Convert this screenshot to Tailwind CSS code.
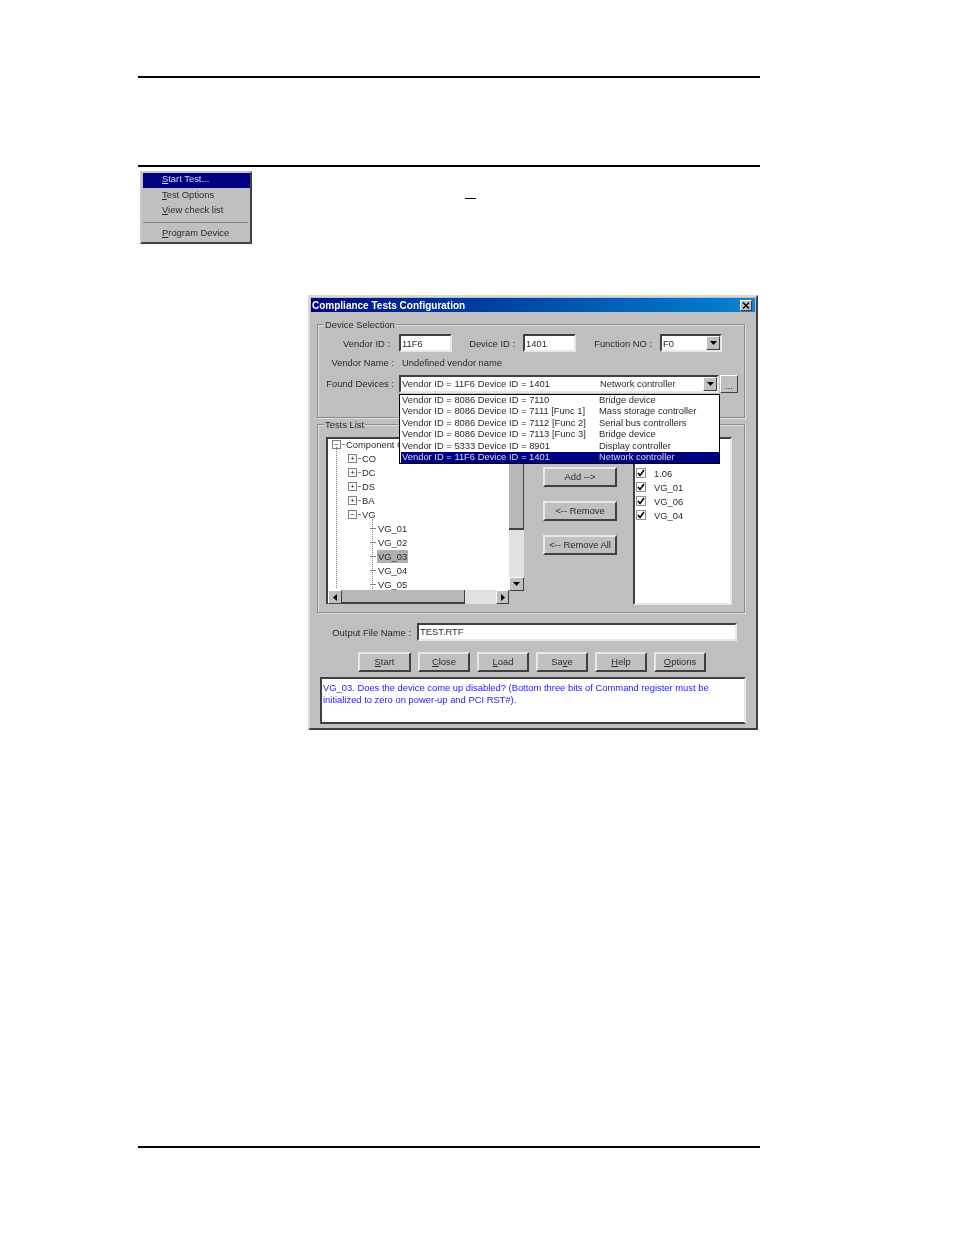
<!DOCTYPE html>
<html lang="en">
<head>
  <meta charset="UTF-8" />
  <title>Compliance Tests Configuration</title>
  <script src="https://cdn.jsdelivr.net/npm/@tailwindcss/browser@4"></script>
</head>
<body class="bg-white font-['Liberation_Sans',Arial,sans-serif] text-[9.4px] leading-[11px] text-[#2a2a2a]">
  <div class="w-[954px] h-[1235px] overflow-hidden pl-[138px] pt-[76px]">
    <div class="w-[622px] h-[2px] bg-black"></div>
    <div class="w-[622px] h-[2px] bg-black mt-[87px]"></div>

    <!-- context menu + stray underscore -->
    <div class="flex mt-[4px] ml-[2px] h-[73px]">
      <div class="w-[112px] h-[73px] bg-[#c0c0c0] border-2 border-t-[#c8c8c8] border-l-[#c8c8c8] border-r-[#404040] border-b-[#404040] pl-[1px] pt-0 blur-[0.6px]">
        <div class="h-[15px] bg-[#000080] text-[#d8d8ff] pl-[19px] pb-[4px] flex items-center"><span><u>S</u>tart Test...</span></div>
        <div class="h-[16px] pl-[19px] pb-[4px] flex items-center"><span><u>T</u>est Options</span></div>
        <div class="h-[15px] pl-[19px] pb-[4px] flex items-center"><span><u>V</u>iew check list</span></div>
        <div class="h-[1px] bg-[#808080] mt-[3px] mb-[1px] mr-[2px]"></div>
        <div class="h-[16px] pl-[19px] pb-[4px] mt-[3px] flex items-center"><span><u>P</u>rogram Device</span></div>
      </div>
      <div class="w-[11px] h-[1px] bg-black ml-[213px] mt-[27px]"></div>
    </div>

    <!-- dialog -->
    <div class="w-[450px] h-[435px] ml-[170px] mt-[51px] bg-[#bfbfbf] border-2 border-t-[#d8d8d8] border-l-[#d8d8d8] border-r-[#404040] border-b-[#404040] p-px blur-[0.6px]">
      <div class="h-[14px] bg-gradient-to-r from-[#000080] to-[#1084d0] flex items-center justify-between pl-[1px] pr-[3px]">
        <span class="text-white font-bold text-[10px] pt-px">Compliance Tests Configuration</span>
        <div class="w-[12px] h-[11px] bg-[#c0c0c0] border border-t-white border-l-white border-r-[#404040] border-b-[#404040] flex items-center justify-center">
          <svg viewBox="0 0 8 7" class="w-[8px] h-[7px]"><path d="M1 0.5 7 6.5M7 0.5 1 6.5" stroke="#000" stroke-width="1.4" fill="none"/></svg>
        </div>
      </div>

      <div class="px-[6px] pt-[12px]">
        <!-- device selection -->
        <div class="relative w-[428px] h-[94px] border border-[#8a8a8a] shadow-[inset_1px_1px_0_#e0e0e0,1px_1px_0_#e0e0e0] pt-[9px]">
          <span class="absolute -top-[6px] left-[6px] bg-[#bfbfbf] px-[1px]">Device Selection</span>
          <div class="flex items-center h-[18px]">
            <span class="w-[72px] text-right">Vendor ID :</span>
            <div class="ml-[9px] w-[53px] h-[18px] bg-white border-2 border-t-[#404040] border-l-[#404040] border-r-[#e8e8e8] border-b-[#e8e8e8] flex items-center pl-px">11F6</div>
            <span class="w-[63px] text-right">Device ID :</span>
            <div class="ml-[8px] w-[53px] h-[18px] bg-white border-2 border-t-[#404040] border-l-[#404040] border-r-[#e8e8e8] border-b-[#e8e8e8] flex items-center pl-px">1401</div>
            <span class="w-[76px] text-right">Function NO :</span>
            <div class="ml-[8px] w-[62px] h-[18px] bg-white border-2 border-t-[#404040] border-l-[#404040] border-r-[#e8e8e8] border-b-[#e8e8e8] flex items-center justify-between pl-px">
              <span>F0</span>
              <div class="w-[14px] h-[14px] bg-[#c0c0c0] border border-t-white border-l-white border-r-[#404040] border-b-[#404040] flex items-center justify-center">
                <svg viewBox="0 0 7 4" class="w-[7px] h-[4px]"><path d="M0 0h7L3.5 4z" fill="#000"/></svg>
              </div>
            </div>
          </div>
          <div class="flex items-center h-[14px] mt-[3px]">
            <span class="w-[76px] text-right">Vendor Name :</span>
            <span class="ml-[8px]">Undefined vendor name</span>
          </div>
          <div class="flex items-center h-[18px] mt-[6px]">
            <span class="w-[76px] text-right pb-[2px]">Found Devices :</span>
            <div class="relative ml-[5px] w-[320px] h-[18px] bg-white border-2 border-t-[#404040] border-l-[#404040] border-r-[#e8e8e8] border-b-[#e8e8e8] flex items-center pl-px pb-[2px]">
              <span class="w-[198px]">Vendor ID = 11F6 Device ID = 1401</span>
              <span>Network controller</span>
              <div class="absolute right-0 top-0 w-[14px] h-[14px] bg-[#c0c0c0] border border-t-white border-l-white border-r-[#404040] border-b-[#404040] flex items-center justify-center">
                <svg viewBox="0 0 7 4" class="w-[7px] h-[4px]"><path d="M0 0h7L3.5 4z" fill="#000"/></svg>
              </div>
              <!-- open dropdown -->
              <div class="absolute z-10 -left-[2px] top-[17px] w-[321px] h-[70px] bg-white border border-black pl-[2px] leading-[9.4px]">
                <div class="flex h-[11.4px]"><span class="w-[197px]">Vendor ID = 8086 Device ID = 7110</span><span>Bridge device</span></div>
                <div class="flex h-[11.4px]"><span class="w-[197px]">Vendor ID = 8086 Device ID = 7111 [Func 1]</span><span>Mass storage controller</span></div>
                <div class="flex h-[11.4px]"><span class="w-[197px]">Vendor ID = 8086 Device ID = 7112 [Func 2]</span><span>Serial bus controllers</span></div>
                <div class="flex h-[11.4px]"><span class="w-[197px]">Vendor ID = 8086 Device ID = 7113 [Func 3]</span><span>Bridge device</span></div>
                <div class="flex h-[11.4px]"><span class="w-[197px]">Vendor ID = 5333 Device ID = 8901</span><span>Display controller</span></div>
                <div class="flex h-[11.4px] bg-[#000080] text-[#d8d8ff] -ml-[1px] pl-px"><span class="w-[197px]">Vendor ID = 11F6 Device ID = 1401</span><span>Network controller</span></div>
              </div>
            </div>
            <div class="ml-px w-[18px] h-[18px] bg-[#c0c0c0] border border-t-white border-l-white border-r-[#404040] border-b-[#404040] flex items-center justify-center pt-[3px]">...</div>
          </div>
        </div>

        <!-- tests list -->
        <div class="relative w-[428px] h-[189px] mt-[6px] border border-[#8a8a8a] shadow-[inset_1px_1px_0_#e0e0e0,1px_1px_0_#e0e0e0] pt-[12px] pl-[8px] flex">
          <span class="absolute -top-[6px] left-[6px] bg-[#bfbfbf] px-[1px]">Tests List</span>

          <!-- tree -->
          <div class="relative w-[198px] h-[167px] bg-white border-2 border-r-0 border-b-0 border-t-[#404040] border-l-[#404040] overflow-hidden">
            <div class="absolute left-[8px] top-[8px] bottom-[16px] border-l border-dotted border-[#808080]"></div>
            <div class="absolute left-[44px] top-[80px] h-[70px] border-l border-dotted border-[#808080]"></div>
            <div class="-mt-[2px]">
              <div class="flex items-center h-[14px] pl-[4px] gap-[1px]">
                <span class="w-[9px] h-[9px] bg-white border border-[#808080] flex items-center justify-center text-[8px]">−</span><span class="w-[3px] h-px bg-[#808080]"></span><span>Component C</span>
              </div>
              <div class="flex items-center h-[14px] pl-[20px] gap-[1px]">
                <span class="w-[9px] h-[9px] bg-white border border-[#808080] flex items-center justify-center text-[8px]">+</span><span class="w-[3px] h-px bg-[#808080]"></span><span>CO</span>
              </div>
              <div class="flex items-center h-[14px] pl-[20px] gap-[1px]">
                <span class="w-[9px] h-[9px] bg-white border border-[#808080] flex items-center justify-center text-[8px]">+</span><span class="w-[3px] h-px bg-[#808080]"></span><span>DC</span>
              </div>
              <div class="flex items-center h-[14px] pl-[20px] gap-[1px]">
                <span class="w-[9px] h-[9px] bg-white border border-[#808080] flex items-center justify-center text-[8px]">+</span><span class="w-[3px] h-px bg-[#808080]"></span><span>DS</span>
              </div>
              <div class="flex items-center h-[14px] pl-[20px] gap-[1px]">
                <span class="w-[9px] h-[9px] bg-white border border-[#808080] flex items-center justify-center text-[8px]">+</span><span class="w-[3px] h-px bg-[#808080]"></span><span>BA</span>
              </div>
              <div class="flex items-center h-[14px] pl-[20px] gap-[1px]">
                <span class="w-[9px] h-[9px] bg-white border border-[#808080] flex items-center justify-center text-[8px]">−</span><span class="w-[3px] h-px bg-[#808080]"></span><span>VG</span>
              </div>
              <div class="flex items-center h-[14px] pl-[42px]"><span class="w-[6px] h-px bg-[#808080] mr-px"></span><span class="px-px">VG_01</span></div>
              <div class="flex items-center h-[14px] pl-[42px]"><span class="w-[6px] h-px bg-[#808080] mr-px"></span><span class="px-px">VG_02</span></div>
              <div class="flex items-center h-[14px] pl-[42px]"><span class="w-[6px] h-px bg-[#808080] mr-px"></span><span class="px-px py-[1px] bg-[#b0b0b0]">VG_03</span></div>
              <div class="flex items-center h-[14px] pl-[42px]"><span class="w-[6px] h-px bg-[#808080] mr-px"></span><span class="px-px">VG_04</span></div>
              <div class="flex items-center h-[14px] pl-[42px]"><span class="w-[6px] h-px bg-[#808080] mr-px"></span><span class="px-px">VG_05</span></div>
            </div>
            <!-- scrollbars -->
            <div class="absolute right-0 top-0 bottom-0 w-[15px] bg-[#e0e0e0] flex flex-col">
              <div class="h-[91px] bg-[#b8b8b8] border-b-2 border-r border-b-[#404040] border-r-[#404040]"></div>
              <div class="h-[14px] mt-[47px] bg-[#c0c0c0] border border-t-white border-l-white border-r-[#404040] border-b-[#404040] flex items-center justify-center">
                <svg viewBox="0 0 7 4" class="w-[7px] h-[4px]"><path d="M0 0h7L3.5 4z" fill="#000"/></svg>
              </div>
              <div class="flex-1 bg-[#bfbfbf]"></div>
            </div>
            <div class="absolute left-0 right-[15px] bottom-0 h-[14px] bg-[#e0e0e0] flex">
              <div class="w-[14px] bg-[#c0c0c0] border border-t-white border-l-white border-r-[#404040] border-b-[#404040] flex items-center justify-center">
                <svg viewBox="0 0 4 7" class="w-[4px] h-[7px]"><path d="M4 0v7L0 3.5z" fill="#000"/></svg>
              </div>
              <div class="w-[123px] bg-[#b8b8b8] border-r border-b-2 border-r-[#404040] border-b-[#404040]"></div>
              <div class="w-[31px]"></div>
              <div class="w-[13px] bg-[#c0c0c0] border border-t-white border-l-white border-r-[#404040] border-b-[#404040] flex items-center justify-center">
                <svg viewBox="0 0 4 7" class="w-[4px] h-[7px]"><path d="M0 0v7l4-3.5z" fill="#000"/></svg>
              </div>
            </div>
          </div>

          <!-- add / remove -->
          <div class="ml-[19px] w-[74px] pt-[30px] flex flex-col gap-[14px]">
            <div class="h-[20px] pb-[2px] bg-[#c0c0c0] border-2 border-t-[#e8e8e8] border-l-[#e8e8e8] border-r-[#404040] border-b-[#404040] flex items-center justify-center">Add --&gt;</div>
            <div class="h-[20px] pb-[2px] bg-[#c0c0c0] border-2 border-t-[#e8e8e8] border-l-[#e8e8e8] border-r-[#404040] border-b-[#404040] flex items-center justify-center">&lt;-- Remove</div>
            <div class="h-[20px] pb-[2px] bg-[#c0c0c0] border-2 border-t-[#e8e8e8] border-l-[#e8e8e8] border-r-[#404040] border-b-[#404040] flex items-center justify-center">&lt;-- Remove All</div>
          </div>

          <!-- selected tests -->
          <div class="ml-[16px] w-[99px] h-[168px] bg-white border-2 border-t-[#404040] border-l-[#404040] border-r-[#e8e8e8] border-b-[#e8e8e8] pt-[27px] pl-[1px]">
            <div class="flex items-center h-[14px] gap-[8px]"><span class="w-[10px] h-[10px] bg-white border border-[#909090] flex items-center justify-center"><svg viewBox="0 0 8 8" class="w-[8px] h-[8px]"><path d="M1 4l2 2.5L7 1" stroke="#000" stroke-width="1.6" fill="none"/></svg></span><span>1.06</span></div>
            <div class="flex items-center h-[14px] gap-[8px]"><span class="w-[10px] h-[10px] bg-white border border-[#909090] flex items-center justify-center"><svg viewBox="0 0 8 8" class="w-[8px] h-[8px]"><path d="M1 4l2 2.5L7 1" stroke="#000" stroke-width="1.6" fill="none"/></svg></span><span>VG_01</span></div>
            <div class="flex items-center h-[14px] gap-[8px]"><span class="w-[10px] h-[10px] bg-white border border-[#909090] flex items-center justify-center"><svg viewBox="0 0 8 8" class="w-[8px] h-[8px]"><path d="M1 4l2 2.5L7 1" stroke="#000" stroke-width="1.6" fill="none"/></svg></span><span>VG_06</span></div>
            <div class="flex items-center h-[14px] gap-[8px]"><span class="w-[10px] h-[10px] bg-white border border-[#909090] flex items-center justify-center"><svg viewBox="0 0 8 8" class="w-[8px] h-[8px]"><path d="M1 4l2 2.5L7 1" stroke="#000" stroke-width="1.6" fill="none"/></svg></span><span>VG_04</span></div>
          </div>
        </div>

        <!-- output file -->
        <div class="flex items-center h-[18px] mt-[10px]">
          <span class="w-[94px] text-right">Output File Name :</span>
          <div class="ml-[6px] w-[320px] h-[18px] bg-white border-2 border-t-[#404040] border-l-[#404040] border-r-[#e8e8e8] border-b-[#e8e8e8] flex items-center pl-px pb-[2px]">TEST.RTF</div>
        </div>

        <!-- action buttons -->
        <div class="flex gap-[7px] ml-[41px] mt-[11px]">
          <div class="w-[53px] h-[20px] pb-[2px] bg-[#c0c0c0] border-2 border-t-[#e8e8e8] border-l-[#e8e8e8] border-r-[#404040] border-b-[#404040] flex items-center justify-center"><span><u>S</u>tart</span></div>
          <div class="w-[52px] h-[20px] pb-[2px] bg-[#c0c0c0] border-2 border-t-[#e8e8e8] border-l-[#e8e8e8] border-r-[#404040] border-b-[#404040] flex items-center justify-center"><span><u>C</u>lose</span></div>
          <div class="w-[52px] h-[20px] pb-[2px] bg-[#c0c0c0] border-2 border-t-[#e8e8e8] border-l-[#e8e8e8] border-r-[#404040] border-b-[#404040] flex items-center justify-center"><span><u>L</u>oad</span></div>
          <div class="w-[52px] h-[20px] pb-[2px] bg-[#c0c0c0] border-2 border-t-[#e8e8e8] border-l-[#e8e8e8] border-r-[#404040] border-b-[#404040] flex items-center justify-center"><span>Sa<u>v</u>e</span></div>
          <div class="w-[52px] h-[20px] pb-[2px] bg-[#c0c0c0] border-2 border-t-[#e8e8e8] border-l-[#e8e8e8] border-r-[#404040] border-b-[#404040] flex items-center justify-center"><span><u>H</u>elp</span></div>
          <div class="w-[52px] h-[20px] pb-[2px] bg-[#c0c0c0] border-2 border-t-[#e8e8e8] border-l-[#e8e8e8] border-r-[#404040] border-b-[#404040] flex items-center justify-center"><span><u>O</u>ptions</span></div>
        </div>

        <!-- description -->
        <div class="w-[426px] h-[47px] mt-[5px] ml-[3px] bg-white border-2 border-t-[#404040] border-l-[#404040] border-r-[#e8e8e8] border-b-[#404040] text-[#2020ff] leading-[12px] pl-px pt-[3px]">
          VG_03. Does the device come up disabled? (Bottom three bits of Command register must be<br />initialized to zero on power-up and PCI RST#).
        </div>
      </div>
    </div>

    <div class="w-[622px] h-[2px] bg-black mt-[416px]"></div>
  </div>
</body>
</html>
